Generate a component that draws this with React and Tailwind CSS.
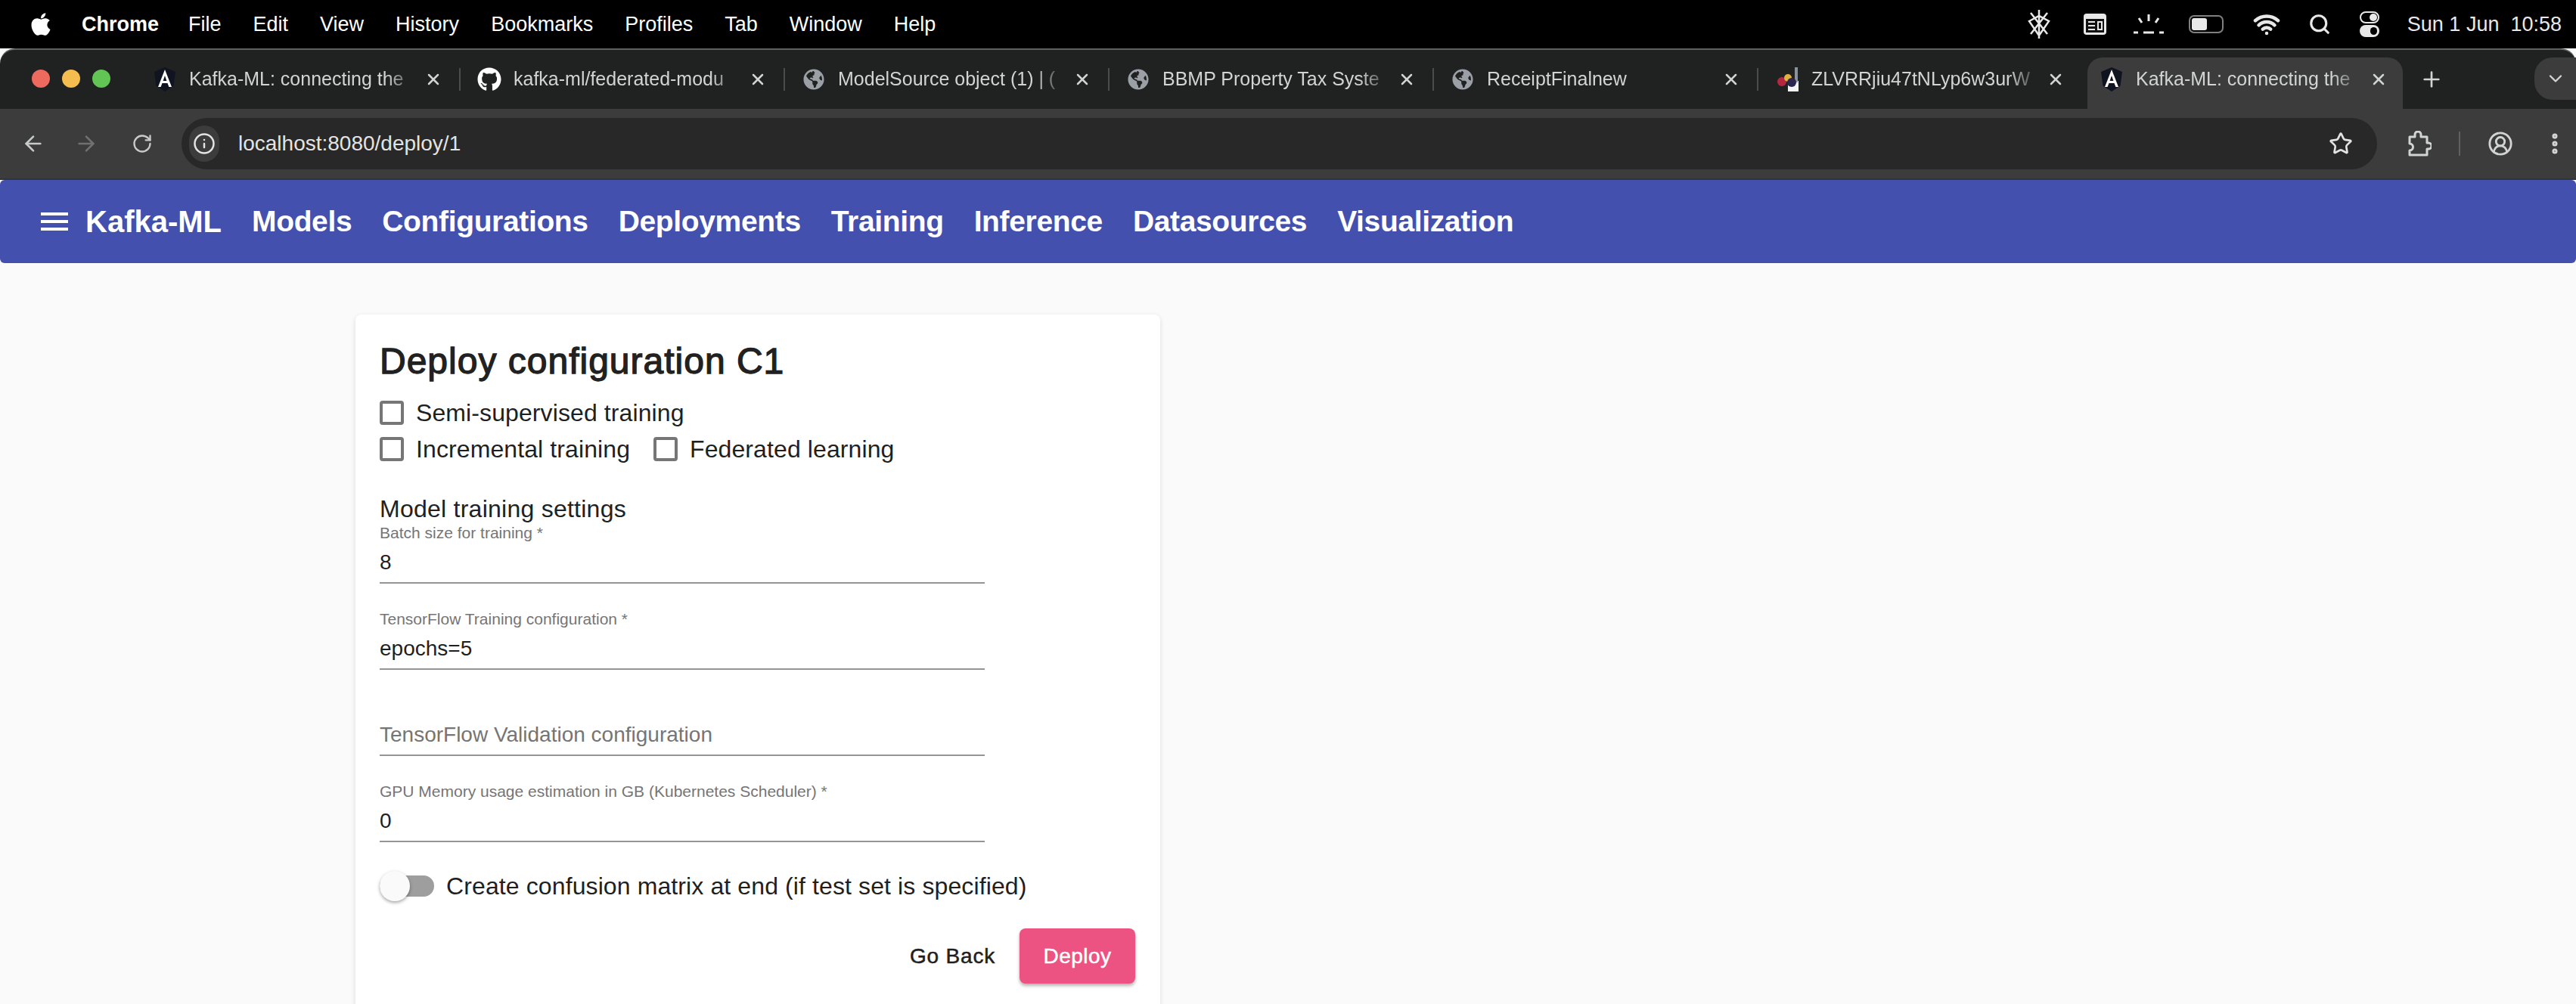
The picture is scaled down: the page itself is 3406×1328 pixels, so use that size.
import { ArrowLeft, ArrowRight, ChevronDown, CircleUserRound, EllipsisVertical, Info, Plus, RotateCw, Search, Star, Wifi, X } from "lucide-react";
import { FaApple, FaGithub, FaGlobeAmericas } from "react-icons/fa";

const menuItems = ["File", "Edit", "View", "History", "Bookmarks", "Profiles", "Tab", "Window", "Help"];
const navItems = ["Models", "Configurations", "Deployments", "Training", "Inference", "Datasources", "Visualization"];

const tabs = [
  { title: "Kafka-ML: connecting the", icon: "angular" },
  { title: "kafka-ml/federated-modu", icon: "github" },
  { title: "ModelSource object (1) | (", icon: "globe" },
  { title: "BBMP Property Tax Syste", icon: "globe" },
  { title: "ReceiptFinalnew", icon: "globe" },
  { title: "ZLVRRjiu47tNLyp6w3urW", icon: "pic" },
  { title: "Kafka-ML: connecting the", icon: "angular", active: true },
];

function AngularIcon() {
  return (
    <svg viewBox="0 0 32 32" className="h-8 w-8 shrink-0">
      <path d="M16 0 2 6l2.5 18.5L16 32l11.5-7.5L30 6z" fill="#0f1420" />
      <path d="M16 3 7 26h3.6l1.9-5h7l1.9 5H25zm0 8 2.4 7h-4.8z" fill="#fff" />
    </svg>
  );
}

function PicIcon() {
  return (
    <svg viewBox="0 0 32 32" className="h-8 w-8 shrink-0">
      <rect x="17" y="18" width="14" height="14" fill="#f4f4f4" />
      <rect x="26" y="0" width="4" height="20" fill="#8a939c" />
      <circle cx="9" cy="19" r="6" fill="#b3283f" />
      <circle cx="17" cy="14" r="5" fill="#e0b040" />
      <circle cx="22" cy="20" r="6" fill="#2b2550" />
    </svg>
  );
}

function TabIcon({ icon }) {
  if (icon === "angular") return <AngularIcon />;
  if (icon === "github") return <FaGithub className="h-8 w-8 shrink-0 text-white" />;
  if (icon === "pic") return <PicIcon />;
  return <FaGlobeAmericas className="mx-[2px] h-7 w-7 shrink-0 text-[#9aa0a6]" />;
}

function Tab({ tab, last }) {
  return (
    <div
      className={
        tab.active
          ? "relative mx-[6px] mt-[10px] flex h-[68px] w-[417px] shrink-0 items-center rounded-t-[20px] bg-[#3c3c3c] pb-[10px] pl-[16px] pr-[20px]"
          : "relative mt-[10px] flex h-[68px] w-[429px] shrink-0 items-center pb-[10px] pl-[22px] pr-[24px]"
      }
    >
      <TabIcon icon={tab.icon} />
      <span className="ml-[16px] min-w-0 flex-1 overflow-hidden whitespace-nowrap text-[25px] text-[#d2d4d4] [mask-image:linear-gradient(to_right,black_86%,transparent_100%)]">
        {tab.title}
      </span>
      <X size={24} strokeWidth={2.5} className="ml-[8px] shrink-0 text-[#d2d4d4]" />
      {!tab.active && !last && <span className="absolute right-0 top-[14px] h-[30px] w-[2px] bg-[#4b4d4d]" />}
    </div>
  );
}

function CheckOption({ label }) {
  return (
    <label className="flex items-center gap-[16px]">
      <span className="h-[32px] w-[32px] rounded-[4px] border-[4px] border-[#767676] bg-white" />
      <span className="text-[32px] tracking-[0.1px] text-[#1f1f1f]">{label}</span>
    </label>
  );
}

function Field({ label, value, placeholder }) {
  return (
    <div className="mt-[35px] w-[800px] border-b-2 border-[#949494] pb-[6px] first:mt-0">
      <div className="h-[24px] text-[21px] leading-[24px] text-[#757575]">{label}</div>
      <div className={placeholder ? "mt-[7px] h-[40px] text-[28px] leading-[40px] text-[#757575]" : "mt-[7px] h-[40px] text-[28px] leading-[40px] text-[#1f1f1f]"}>
        {value || placeholder}
      </div>
    </div>
  );
}

export default function App() {
  return (
    <div className="flex h-[1328px] w-[3406px] flex-col overflow-hidden bg-[#fafafa] font-['Liberation_Sans',Arial,sans-serif]">
      {/* mac menu bar */}
      <div className="flex h-[64px] shrink-0 items-center bg-black pl-[38px] pr-[19px] text-[27px] text-white">
        <FaApple className="mr-[38px] h-[34px] w-[32px]" />
        <span className="mr-[39px] font-bold">Chrome</span>
        <div className="flex gap-[42px]">
          {menuItems.map((item) => (
            <span key={item}>{item}</span>
          ))}
        </div>
        <div className="ml-auto flex items-center text-[#e8e8e8]">
          <svg viewBox="0 0 32 40" className="mr-[42px] h-[40px] w-[32px]" fill="none" stroke="currentColor" strokeWidth="2.5">
            <path d="M16 1v38M5 5l22 28M27 5 5 33M3 16l13-7 13 7-13 19z" />
          </svg>
          <svg viewBox="0 0 32 32" className="mr-[35px] h-[32px] w-[32px]">
            <rect x="1" y="2" width="30" height="28" rx="4" fill="#e8e8e8" />
            <rect x="4" y="9" width="24" height="18" fill="#111" />
            <path d="M7 13h9M7 18h9M7 23h9M20 13h5v10h-5z" stroke="#e8e8e8" strokeWidth="2" fill="none" />
          </svg>
          <svg viewBox="0 0 40 28" className="mr-[33px] h-[28px] w-[40px]" stroke="currentColor" strokeWidth="3" fill="none">
            <path d="M20 1v9M7 6l4 6M33 6l-4 6M0 25h6M13 25h14M34 25h6" />
          </svg>
          <div className="mr-[39px] flex h-[24px] w-[46px] items-center rounded-[7px] border-2 border-[#808080] p-[2px]">
            <span className="h-full w-[20px] rounded-[3px] bg-[#e8e8e8]" />
          </div>
          <Wifi size={36} strokeWidth={3} className="mr-[37px]" />
          <Search size={30} strokeWidth={2.5} className="mr-[38px]" />
          <div className="mr-[37px] flex h-[34px] w-[26px] flex-col gap-[2px]">
            <span className="flex h-[16px] justify-end rounded-full border-2 border-[#e8e8e8] p-[1px]"><span className="w-[10px] rounded-full bg-[#e8e8e8]" /></span>
            <span className="flex h-[16px] justify-end rounded-full bg-[#e8e8e8] p-[3px]"><span className="w-[9px] rounded-full bg-black" /></span>
          </div>
          <span className="whitespace-pre">Sun 1 Jun  10:58</span>
        </div>
      </div>

      {/* tab strip */}
      <div className="flex h-[80px] shrink-0 rounded-t-[20px] border-t-2 border-[#5f6161] bg-[#202222]">
        <div className="mb-[2px] flex w-[180px] shrink-0 items-center gap-[16px] pl-[42px]">
          <span className="h-[24px] w-[24px] rounded-full bg-[#ee6a5f]" />
          <span className="h-[24px] w-[24px] rounded-full bg-[#f5bd4f]" />
          <span className="h-[24px] w-[24px] rounded-full bg-[#61c454]" />
        </div>
        {tabs.map((tab, i) => (
          <Tab key={i} tab={tab} last={i === 5} />
        ))}
        <Plus size={32} strokeWidth={2} className="ml-[16px] mt-[23px] text-[#d2d4d4]" />
        <div className="ml-auto mt-[10px] flex h-[56px] w-[55px] items-center justify-center rounded-l-[24px] bg-[#3c3c3c]">
          <ChevronDown size={28} className="text-[#d2d4d4]" />
        </div>
      </div>

      {/* toolbar */}
      <div className="flex h-[92px] shrink-0 items-center bg-[#3c3c3c] text-[#c8caca]">
        <div className="flex w-[240px] shrink-0 items-center pl-[28px]">
          <ArrowLeft size={32} strokeWidth={2} />
          <ArrowRight size={32} strokeWidth={2} className="ml-[38px] text-[#6f7171]" />
          <RotateCw size={28} strokeWidth={2} className="ml-[44px]" />
        </div>
        <div className="flex h-[68px] w-[2903px] shrink-0 items-center rounded-full bg-[#282828] pl-[10px] pr-[32px]">
          <span className="flex h-[48px] w-[40px] items-center justify-center rounded-full bg-[#3c3c3c]">
            <Info size={30} strokeWidth={2} className="text-[#e3e3e3]" />
          </span>
          <span className="ml-[25px] text-[28px] text-[#e3e3e3]">localhost:8080/deploy/1</span>
          <Star size={32} strokeWidth={2} className="ml-auto text-[#e3e3e3]" />
        </div>
        <svg viewBox="0 0 34 34" className="ml-[38px] h-[34px] w-[34px] text-[#d2d4d4]" fill="none" stroke="currentColor" strokeWidth="3" strokeLinejoin="round">
          <path d="M5 8h7V5a4 4 0 0 1 8 0v3h8v8h2a4 4 0 0 1 0 8h-2v8H5v-6a4 4 0 0 0 0-9z" />
        </svg>
        <span className="ml-[36px] h-[32px] w-[2px] bg-[#5f6161]" />
        <CircleUserRound size={34} strokeWidth={2} className="ml-[36px] text-[#d2d4d4]" />
        <EllipsisVertical size={34} strokeWidth={3} className="ml-[38px] text-[#d2d4d4]" />
      </div>
      <div className="h-[2px] shrink-0 bg-[#333535]" />

      {/* app bar */}
      <div className="flex h-[110px] shrink-0 items-center gap-[40px] rounded-[6px] bg-[#4450ae] pl-[54px] text-white">
        <div className="flex items-center gap-[23px]">
          <div className="flex w-[36px] flex-col gap-[6px]">
            <span className="h-[4px] bg-white" />
            <span className="h-[4px] bg-white" />
            <span className="h-[4px] bg-white" />
          </div>
          <span className="text-[40px] font-bold">Kafka-ML</span>
        </div>
        {navItems.map((item) => (
          <span key={item} className="text-[39px] font-bold tracking-[-0.35px]">
            {item}
          </span>
        ))}
      </div>

      {/* deploy form */}
      <div className="flex-1 pl-[470px] pt-[68px]">
        <div className="h-[920px] w-[1064px] rounded-[8px] bg-white pl-[32px] pr-[33px] pt-[32px] shadow-[0_2px_6px_rgba(0,0,0,0.12)]">
          <h2 className="h-[60px] text-[48px] font-normal leading-[60px] tracking-[1px] text-[#212121] [-webkit-text-stroke-width:1.3px]">Deploy configuration C1</h2>
          <div className="mt-[14px] flex h-[48px] items-center">
            <CheckOption label="Semi-supervised training" />
          </div>
          <div className="flex h-[48px] items-center gap-[31px]">
            <CheckOption label="Incremental training" />
            <CheckOption label="Federated learning" />
          </div>
          <div className="mt-[35px] h-[40px] text-[32px] leading-[40px] tracking-[0.25px] text-[#212121]">Model training settings</div>
          <div>
            <Field label="Batch size for training *" value="8" />
            <Field label="TensorFlow Training configuration *" value="epochs=5" />
            <Field placeholder="TensorFlow Validation configuration" />
            <Field label="GPU Memory usage estimation in GB (Kubernetes Scheduler) *" value="0" />
          </div>
          <div className="mt-[38px] flex h-[40px] items-center gap-[16px]">
            <div className="relative h-[28px] w-[72px] rounded-full bg-[#9e9e9e]">
              <span className="absolute -top-[6px] left-0 h-[40px] w-[40px] rounded-full bg-[#fafafa] shadow-[0_2px_4px_rgba(0,0,0,0.35)]" />
            </div>
            <span className="text-[32px] tracking-[0.11px] text-[#1f1f1f]">Create confusion matrix at end (if test set is specified)</span>
          </div>
          <div className="mt-[36px] flex items-center justify-end">
            <button className="h-[73px] px-[32px] text-[28px] tracking-[0.8px] text-[#1f1f1f] [-webkit-text-stroke-width:0.5px]">Go Back</button>
            <button className="h-[73px] w-[153px] rounded-[8px] bg-[#ec5282] text-[28px] tracking-[0.5px] text-white shadow-[0_3px_4px_rgba(0,0,0,0.3)] [-webkit-text-stroke-width:0.5px]">Deploy</button>
          </div>
        </div>
      </div>
    </div>
  );
}
